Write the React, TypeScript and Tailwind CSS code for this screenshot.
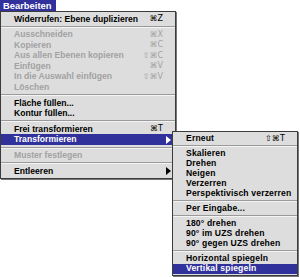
import React from "react";

type Item =
  | { sep: true }
  | { label: string; sc?: string; dis?: boolean; hi?: boolean; arrow?: boolean; sep?: false };

const main: Item[] = [
  { label: "Widerrufen: Ebene duplizieren", sc: "⌘Z" },
  { sep: true },
  { label: "Ausschneiden", sc: "⌘X", dis: true },
  { label: "Kopieren", sc: "⌘C", dis: true },
  { label: "Aus allen Ebenen kopieren", sc: "⇧⌘C", dis: true },
  { label: "Einfügen", sc: "⌘V", dis: true },
  { label: "In die Auswahl einfügen", sc: "⇧⌘V", dis: true },
  { label: "Löschen", dis: true },
  { sep: true },
  { label: "Fläche füllen..." },
  { label: "Kontur füllen..." },
  { sep: true },
  { label: "Frei transformieren", sc: "⌘T" },
  { label: "Transformieren", hi: true, arrow: true },
  { sep: true },
  { label: "Muster festlegen", dis: true },
  { sep: true },
  { label: "Entleeren", arrow: true },
];

const sub: Item[] = [
  { label: "Erneut", sc: "⇧⌘T" },
  { sep: true },
  { label: "Skalieren" },
  { label: "Drehen" },
  { label: "Neigen" },
  { label: "Verzerren" },
  { label: "Perspektivisch verzerren" },
  { sep: true },
  { label: "Per Eingabe..." },
  { sep: true },
  { label: "180° drehen" },
  { label: "90° im UZS drehen" },
  { label: "90° gegen UZS drehen" },
  { sep: true },
  { label: "Horizontal spiegeln" },
  { label: "Vertikal spiegeln", hi: true },
];

function Arrow({ white }: { white?: boolean }) {
  return (
    <svg width="5" height="8" viewBox="0 0 5 8" className="absolute right-[4px] top-[1.5px]">
      <path d="M0 0 L5 4 L0 8 Z" fill={white ? "#ffffff" : "#000000"} />
    </svg>
  );
}

function Menu({ items, itemH }: { items: Item[]; itemH: string }) {
  return (
    <div className="flex flex-col py-[1.5px]">
      {items.map((it, i) =>
        it.sep ? (
          <div key={i} className="h-[5px] flex flex-col justify-center">
            <div className="h-px bg-[#9a9a9a]" />
            <div className="h-px bg-[#f4f4f4]" />
          </div>
        ) : (
          <div
            key={i}
            className={
              "relative flex items-center pl-[13px] leading-none whitespace-nowrap " +
              itemH +
              " " +
              (it.hi ? "bg-[#31319c] text-white" : it.dis ? "text-[#a2a2a2]" : "text-black")
            }
          >
            <span>{it.label}</span>
            {it.sc && (
              <span
                className="absolute top-[1.5px] right-[12px] font-normal"
                style={{ fontFamily: '"DejaVu Sans", sans-serif', fontSize: "8px" }}
              >
                {it.sc}
              </span>
            )}
            {it.arrow && <Arrow white={it.hi} />}
          </div>
        )
      )}
    </div>
  );
}

export default function App() {
  return (
    <div
      className="relative w-[300px] h-[277px] bg-white overflow-hidden font-bold text-[8.6px]"
      style={{ fontFamily: '"Liberation Sans", Arial, sans-serif' }}
    >
      <div className="h-[11px] flex">
        <div className="w-[56px] h-[11px] bg-[#31319c] text-white text-[9.4px] pl-[3px] leading-[11px]">Bearbeiten</div>
      </div>
      <div className="w-[177px] flex">
        <div className="w-[176px] bg-[#dddddd] border border-[#3c3c3c] shadow-[1px_1px_0_#777]">
          <Menu items={main} itemH="h-[10.6px]" />
        </div>
      </div>
      <div className="absolute left-[172px] top-[131px] w-[126px] bg-[#dddddd] border border-[#3c3c3c] shadow-[1px_1px_0_#777] tracking-[0.15px]">
        <Menu items={sub} itemH="h-[10px]" />
      </div>
    </div>
  );
}
